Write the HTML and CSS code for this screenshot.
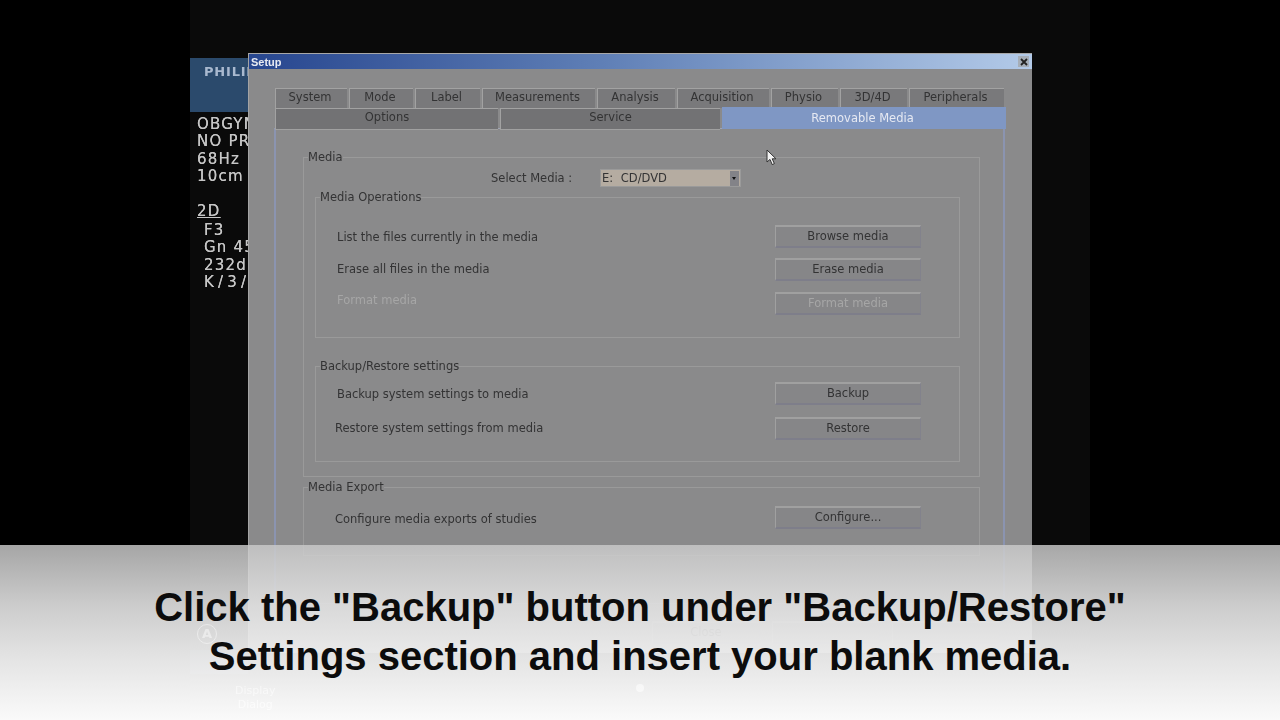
FILE: index.html
```html
<!DOCTYPE html>
<html>
<head>
  <link rel="stylesheet" href="styles.css">
</head>
<body>
  <div class="screen">
    <div class="side-panel">
      <div class="logo">PHILIPS</div>
      <div class="readout">
        <div>OBGYN</div>
        <div>NO PR</div>
        <div>68Hz</div>
        <div>10cm</div>
        <div class="mode">2D</div>
        <div class="indent first">F3</div>
        <div class="indent">Gn 45</div>
        <div class="indent">232d</div>
        <div class="indent tight">K / 3 /</div>
      </div>
    </div>

    <div class="soft-key">A</div>
    <div class="soft-box"></div>
    <div class="display-note">Display<br>Dialog</div>
    <div class="soft-dot"></div>

    <div class="window">
      <div class="title-bar">
        <span class="title">Setup</span>
        <span class="close-btn">
          <svg width="8" height="8" viewBox="0 0 8 8"><path d="M1 1 7 7M7 1 1 7" stroke="#222" stroke-width="1.8"/></svg>
        </span>
      </div>

      <div class="tabs-top">
        <div class="tab">System</div>
        <div class="tab">Mode</div>
        <div class="tab">Label</div>
        <div class="tab">Measurements</div>
        <div class="tab">Analysis</div>
        <div class="tab">Acquisition</div>
        <div class="tab">Physio</div>
        <div class="tab">3D/4D</div>
        <div class="tab">Peripherals</div>
      </div>
      <div class="tabs-bottom">
        <div class="tab">Options</div>
        <div class="tab">Service</div>
        <div class="tab selected">Removable Media</div>
      </div>

      <div class="panel">
        <fieldset class="group">
          <legend>Media</legend>
          <div class="select-row">
            <span class="select-label">Select Media :</span>
            <div class="select">
              <span class="select-value">E: CD/DVD</span>
              <span class="select-arrow"></span>
            </div>
          </div>

          <fieldset class="group inner ops">
            <legend>Media Operations</legend>
            <div class="row">
              <span class="row-label low">List the files currently in the media</span>
              <div class="btn">Browse media</div>
            </div>
            <div class="row">
              <span class="row-label">Erase all files in the media</span>
              <div class="btn">Erase media</div>
            </div>
            <div class="row format">
              <span class="row-label disabled raised">Format media</span>
              <div class="btn disabled">Format media</div>
            </div>
          </fieldset>

          <fieldset class="group inner backup">
            <legend>Backup/Restore settings</legend>
            <div class="row">
              <span class="row-label low">Backup system settings to media</span>
              <div class="btn">Backup</div>
            </div>
            <div class="row restore">
              <span class="row-label shift">Restore system settings from media</span>
              <div class="btn">Restore</div>
            </div>
          </fieldset>
        </fieldset>

        <fieldset class="group export">
          <legend>Media Export</legend>
          <div class="row">
            <span class="row-label lower">Configure media exports of studies</span>
            <div class="btn">Configure...</div>
          </div>
        </fieldset>
      </div>

      <div class="footer">
        <div class="btn footer-btn">Close</div>
        <div class="btn footer-btn"></div>
        <div class="btn footer-btn"></div>
      </div>
    </div>

    <svg class="cursor" width="12" height="17" viewBox="0 0 12 17">
      <path d="M1 1V13L4 10.4 6.2 15.6 8.4 14.6 6.2 9.8H10Z" fill="#f2f2f2" stroke="#333" stroke-width="1"/>
    </svg>
  </div>

  <div class="caption">
    <p>Click the "Backup" button under "Backup/Restore"</p>
    <p>Settings section and insert your blank media.</p>
  </div>
</body>
</html>
```

FILE: styles.css
```css
html, body {
  margin: 0;
  height: 100%;
  background: #000;
  overflow: hidden;
}

.screen {
  position: absolute;
  left: 190px;
  top: 0;
  width: 900px;
  height: 720px;
  background: #0a0a0a;
  font-family: "DejaVu Sans", sans-serif;
  filter: blur(0.5px);
}

.side-panel {
  position: absolute;
  left: 0;
  top: 58px;
  width: 70px;
  overflow: hidden;
  color: #c6c6c6;
}

.logo {
  height: 54px;
  padding: 6px 0 0 14px;
  box-sizing: border-box;
  background: #2b4a6c;
  color: #a9b9cf;
  font-size: 13px;
  font-weight: bold;
  letter-spacing: 0.8px;
  white-space: nowrap;
}

.readout {
  padding: 4px 0 0 7px;
  font-size: 15px;
  line-height: 17.4px;
  letter-spacing: 1.2px;
  white-space: nowrap;
  text-shadow: 0 0 0.5px #c6c6c6;
}

.readout .mode {
  margin-top: 17px;
  text-decoration: underline;
}

.readout .first {
  margin-top: 2px;
}

.readout .indent {
  padding-left: 7px;
}

.readout .tight {
  word-spacing: -3px;
}

.soft-key {
  position: absolute;
  left: 7px;
  top: 624px;
  width: 18px;
  height: 18px;
  border: 1px solid #fff;
  border-radius: 50%;
  color: #fff;
  font-size: 13px;
  font-weight: bold;
  line-height: 18px;
  text-align: center;
}

.soft-box {
  position: absolute;
  left: 0;
  top: 650px;
  width: 58px;
  height: 24px;
  background: #1c2834;
}

.display-note {
  position: absolute;
  left: 45px;
  top: 684px;
  color: #fff;
  font-size: 11px;
  line-height: 14px;
  text-align: center;
}

.soft-dot {
  position: absolute;
  left: 446px;
  top: 684px;
  width: 8px;
  height: 8px;
  background: #fff;
  border-radius: 50%;
}

.window {
  position: absolute;
  left: 58px;
  top: 53px;
  width: 784px;
  height: 600px;
  box-sizing: border-box;
  background: #8a8a8b;
  border-top: 1px solid #a8a8a8;
  border-left: 1px solid #a4a4a4;
  color: #333334;
  font-size: 11.5px;
}

.title-bar {
  display: flex;
  align-items: center;
  justify-content: space-between;
  height: 15px;
  padding: 0 3px 0 2px;
  background: linear-gradient(to right, #27468f, #5f7fb6 45%, #b3cae8);
}

.title {
  color: #e8eaf2;
  font-family: "Liberation Sans", Arial, sans-serif;
  font-size: 11px;
  font-weight: bold;
}

.close-btn {
  display: flex;
  align-items: center;
  justify-content: center;
  width: 11px;
  height: 11px;
  background: #a6aeb8;
}

.tabs-top,
.tabs-bottom {
  display: grid;
  margin-left: 26px;
  text-align: center;
}

.tabs-top {
  grid-template-columns: 74px 66px 67px 115px 80px 94px 69px 69px 97px;
  width: 731px;
  height: 20px;
  margin-top: 19px;
}

.tabs-bottom {
  grid-template-columns: 225px 222px 284px;
  height: 20px;
}

.tab {
  box-sizing: border-box;
  margin-right: 2px;
  background: #79797b;
  border-top: 1px solid #a2a2a2;
  border-left: 1px solid #a2a2a2;
  line-height: 17px;
}

.tabs-top .tab {
  padding-right: 3px;
}

.tabs-bottom .tab {
  background: #727274;
  border-bottom: 1px solid #a0a0a0;
}

.tabs-bottom .tab.selected {
  position: relative;
  top: -1px;
  height: 22px;
  margin-right: 0;
  padding-right: 3px;
  background: #7f97c4;
  border: none;
  color: #e6e9f2;
  line-height: 22px;
}

.panel {
  box-sizing: border-box;
  width: 731px;
  height: 476px;
  margin-left: 25px;
  padding: 20px 23px 0 27px;
  border-top: 1px solid #a0a4b4;
  border-left: 2px solid #8b94b0;
  border-right: 2px solid #8b94b0;
  border-bottom: 1px solid #9a9aa4;
}

fieldset.group {
  margin: 0;
  padding: 4px 0 14px;
  border: 1px solid #9a9a9a;
  min-width: 0;
}

.group legend {
  margin-left: 4px;
  padding: 0;
  line-height: 16px;
  font-size: 11.5px;
}

.group.inner {
  margin: 2px 19px 0 11px;
}

.group.ops {
  padding: 20px 38px 23px 0;
}

.group.backup {
  margin-top: 20px;
  padding: 8px 38px 22px 0;
}

.group.export {
  margin-top: 2px;
  padding: 11px 58px 27px 0;
}

.select-row {
  display: flex;
  align-items: center;
  height: 18px;
  margin-left: 187px;
}

.select-label {
  width: 109px;
}

.select {
  display: flex;
  align-items: center;
  justify-content: space-between;
  box-sizing: border-box;
  width: 141px;
  height: 18px;
  padding: 0 1px 0 1px;
  background: #b5aca1;
  border: 1px solid #9a9a9a;
}

.select-value {
  word-spacing: 4px;
}

.select-arrow {
  position: relative;
  width: 9px;
  height: 15px;
  background: #838388;
}

.select-arrow::after {
  content: "";
  position: absolute;
  left: 2px;
  top: 6px;
  border-left: 2.5px solid transparent;
  border-right: 2.5px solid transparent;
  border-top: 3px solid #111;
}

.row {
  display: flex;
  align-items: center;
  justify-content: space-between;
  height: 22px;
  margin-bottom: 11px;
  padding-left: 21px;
}

.row:last-child {
  margin-bottom: 0;
}

.row.format {
  margin-top: 12px;
}

.row.restore {
  margin-top: 13px;
}

.row-label.shift {
  margin-left: -2px;
}

.row-label.low {
  margin-top: 2px;
}

.row-label.lower {
  margin-top: 4px;
}

.row-label.raised {
  margin-bottom: 6px;
}

.group.export .row {
  padding-left: 31px;
}

.row-label.disabled {
  color: #a6a6a6;
}

.btn {
  box-sizing: border-box;
  width: 146px;
  height: 23px;
  background: #868688;
  border-top: 2px solid #a0a0a0;
  border-left: 1px solid #a0a0a0;
  border-right: 1px solid #82828c;
  border-bottom: 2px solid #7e7e8a;
  line-height: 18px;
  text-align: center;
}

.btn.disabled {
  color: #a6a6a6;
}

.footer {
  display: flex;
  gap: 12px;
  margin: 17px 0 0 403px;
}

.footer-btn {
  width: 108px;
}

.cursor {
  position: absolute;
  left: 576px;
  top: 149px;
}

.caption {
  position: absolute;
  left: 0;
  right: 0;
  bottom: 0;
  height: 175px;
  box-sizing: border-box;
  padding-top: 38px;
  background: linear-gradient(to bottom, rgba(202, 202, 202, 0.82), rgba(225, 225, 225, 0.91) 35%, rgba(240, 240, 240, 0.95) 65%, rgba(255, 255, 255, 0.98));
  color: #0c0c0c;
  font-family: "Liberation Sans", Arial, sans-serif;
  font-size: 40px;
  font-weight: bold;
  line-height: 49px;
  text-align: center;
}

.caption p {
  margin: 0;
}
```
